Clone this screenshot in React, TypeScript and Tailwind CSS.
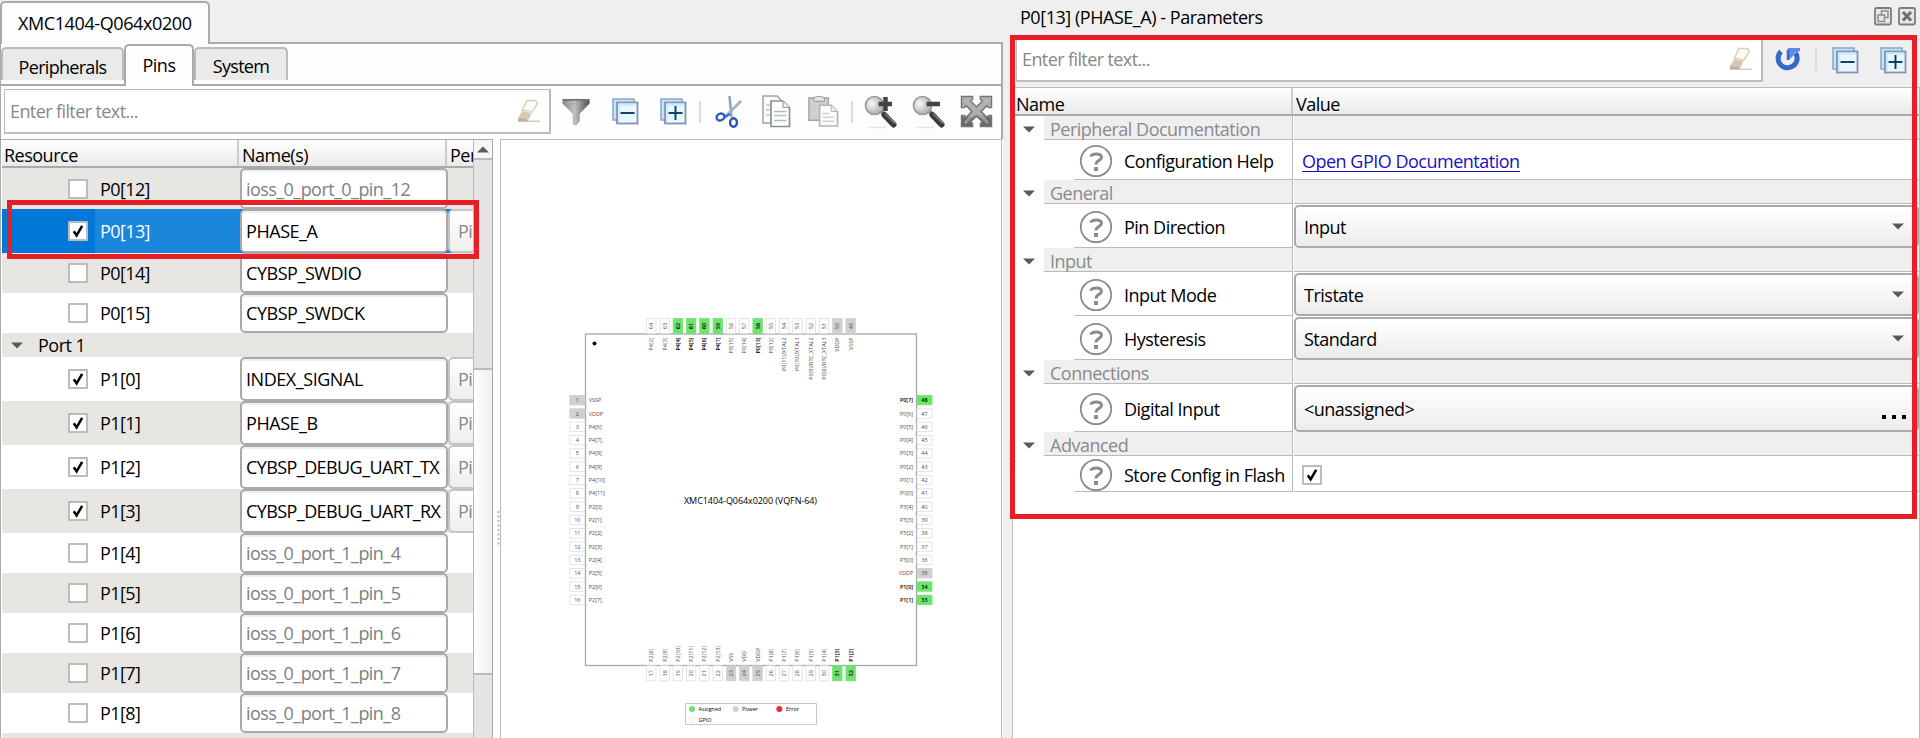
import React from "react";

const face = "font-['Open_Sans','Noto_Sans',sans-serif]";

function Check({ on }: { on?: boolean }) {
  return (
    <span className="flex h-5 w-5 shrink-0 items-center justify-center rounded-[1px] border-2 border-[#bcbcbc] bg-white">
      {on && (
        <svg width="12" height="14" viewBox="0 0 12 14">
          <path d="M1.8 7.2 L4.6 11.4 L10.2 1.8" fill="none" stroke="#000" strokeWidth="2.5" />
        </svg>
      )}
    </span>
  );
}

function Down() {
  return (
    <svg className="block shrink-0" width="12" height="7" viewBox="0 0 12 7">
      <path d="M0 0.5H12L6 6.5Z" fill="#5a5a5a" />
    </svg>
  );
}

function Eraser() {
  return (
    <svg width="24" height="24" viewBox="0 0 24 24">
      <path d="M10 1.500L18.500 1.500L20.500 4.500L15 13L5.500 11Z" fill="#fdfcf9" stroke="#d9cdbb" strokeWidth="1.400" />
      <path d="M5.500 11.500L15 13L10.500 22.500H1L1 19Z" fill="#d6c8b4" />
      <path d="M1.500 19.500L9 20L11 22.500H1Z" fill="#bfae98" />
      <path d="M6 12L14 13.500" stroke="#f1ebe2" strokeWidth="1.200" />
      <path d="M10 22.300H23" stroke="#cfcabd" strokeWidth="1.500" />
    </svg>
  );
}

function BoxIcon({ plus }: { plus?: boolean }) {
  return (
    <svg width="27" height="27" viewBox="0 0 27 27">
      <rect x="1" y="1" width="21" height="21" fill="#c4e2fa" stroke="#8ba6c4" strokeWidth="1.500" />
      <rect x="5" y="4.500" width="20.500" height="21" fill="#e8f7ff" stroke="#8294ae" strokeWidth="1.800" />
      <path d="M7 24V6.500H24" fill="none" stroke="#cbe8fc" strokeWidth="2" />
      <path d="M8.500 15H22.500" stroke="#003a66" strokeWidth="1.900" />
      {plus && <path d="M15.500 8V22" stroke="#003a66" strokeWidth="1.900" />}
    </svg>
  );
}

function Funnel() {
  return (
    <svg width="28" height="28" viewBox="0 0 30 30">
      <defs>
        <linearGradient id="fn" x1="0" x2="1">
          <stop offset="0" stopColor="#858585" />
          <stop offset=".45" stopColor="#c0c0c0" />
          <stop offset="1" stopColor="#4c4c4c" />
        </linearGradient>
      </defs>
      <path d="M.5 1H29.500V6L19 17V25L15 29.500L11.500 28V17L.5 6Z" fill="url(#fn)" />
      <path d="M1 2H29" stroke="#777" strokeWidth="2" />
      <path d="M4 6H20" stroke="#aaa" strokeWidth="1.500" />
    </svg>
  );
}

function Cut() {
  return (
    <svg width="28" height="34" viewBox="0 0 28 34">
      <path d="M14.500 1 L16.500 22" stroke="#8aa4c0" strokeWidth="2.500" />
      <path d="M26 6 L10 22" stroke="#9ab4ce" strokeWidth="2.800" />
      <path d="M15 19 L10 22" stroke="#3f6fc0" strokeWidth="2.500" />
      <ellipse cx="5.500" cy="22" rx="4" ry="3.300" transform="rotate(-25 5.5 22)" fill="none" stroke="#2a5cc8" strokeWidth="2.400" />
      <ellipse cx="18.500" cy="27.500" rx="3.400" ry="4.200" fill="none" stroke="#2450b8" strokeWidth="2.400" />
    </svg>
  );
}

function Copy() {
  return (
    <svg width="29" height="33" viewBox="0 0 29 33">
      <path d="M1 1H15L19 5V28H1Z" fill="#fbfbfb" stroke="#a2a2a2" strokeWidth="1.500" />
      <path d="M4 10H8M4 15H8M4 20H8" stroke="#b6c6d6" strokeWidth="1.500" />
      <path d="M9 6H21L27.500 12.500V31.500H9Z" fill="#fff" stroke="#8e8e8e" strokeWidth="1.700" />
      <path d="M21 6V12.500H27.500" fill="#eee" stroke="#999" />
      <path d="M12 16.500H24.500M12 20.500H24.500M12 25.500H24.500" stroke="#a9bdd0" strokeWidth="1.500" />
    </svg>
  );
}

function Paste() {
  return (
    <svg width="31" height="33" viewBox="0 0 32 33">
      <rect x="1" y="2.500" width="20" height="23" fill="#cfcfcf" stroke="#a5a5a5" strokeWidth="1.600" />
      <path d="M6 2.500L9 1H14L17 2.500V6H6Z" fill="#e4e4e4" stroke="#999" />
      <path d="M12 10H24L30.500 16.500V31.500H12Z" fill="#fdfdfd" stroke="#b3b3b3" strokeWidth="1.700" />
      <path d="M24 10V16.500H30.500" fill="#eee" stroke="#b3b3b3" />
      <path d="M15 18.500H22M15 22.500H27M15 26.500H27" stroke="#d0d0d0" strokeWidth="1.500" />
    </svg>
  );
}

function Lens({ plus }: { plus?: boolean }) {
  return (
    <svg width="34" height="34" viewBox="0 0 34 34">
      <defs>
        <radialGradient id="ln" cx=".35" cy=".4">
          <stop offset="0" stopColor="#fafafa" />
          <stop offset="1" stopColor="#bcbcbc" />
        </radialGradient>
      </defs>
      <path d="M4 32.500H22" stroke="#e6e6e6" strokeWidth="1.500" />
      <path d="M17 16L21 20" stroke="#8a8a8a" strokeWidth="4" />
      <path d="M20.500 20L29.500 29.500" stroke="#3a3a3a" strokeWidth="6" strokeLinecap="round" />
      <path d="M21 18.500L31 28.500" stroke="#808080" strokeWidth="1.500" />
      <circle cx="10.500" cy="10.500" r="9" fill="url(#ln)" stroke="#9a9a9a" strokeWidth="1.600" />
      <path d="M14.500 9H28" stroke="#444" strokeWidth="4.500" />
      {plus && <path d="M21.500 2V16" stroke="#444" strokeWidth="4.500" />}
    </svg>
  );
}

function Fit() {
  return (
    <svg width="33" height="33" viewBox="0 0 34 34">
      <defs>
        <linearGradient id="ft" x2="0" y2="1">
          <stop offset="0" stopColor="#b4b4b4" />
          <stop offset=".6" stopColor="#a0a0a0" />
          <stop offset=".75" stopColor="#666" />
          <stop offset="1" stopColor="#6a6a6a" />
        </linearGradient>
      </defs>
      <path
        d="M1.500 1.500H13V4.500L11 6.500L17 12L23 6.500L21 4.500V1.500H32.500V13H29.500L27.500 11L22 17L27.500 23L29.500 21H32.500V32.500H21V29.500L23 27.500L17 22L11 27.500L13 29.500V32.500H1.500V21H4.500L6.500 23L12 17L6.500 11L4.500 13H1.500Z"
        fill="url(#ft)"
        stroke="#757575"
        strokeWidth="1.400"
      />
      <path d="M5 5L29 29M29 5L5 29" stroke="#bcbcbc" strokeOpacity=".55" strokeWidth="3" />
    </svg>
  );
}

function Reset() {
  return (
    <svg width="26" height="26" viewBox="0 0 26 26">
      <path d="M6 4.500A9.500 9.500 0 1 0 20.500 6" fill="none" stroke="#3568c8" strokeWidth="5" />
      <path d="M13 1H25V4L20 5.500L18 9L14 13Z" fill="#5d8be0" />
      <path d="M13 2.500V13" stroke="#3b6ccc" strokeWidth="2.500" />
    </svg>
  );
}

function Help() {
  return (
    <svg className="shrink-0" width="34" height="34" viewBox="0 0 34 34">
      <circle cx="17" cy="17" r="15.200" fill="#fff" stroke="#8c8c8c" strokeWidth="1.800" />
      <path d="M12 12.800C12 9 22.500 9 22.500 13.200C22.500 16.500 17 16 17 20.500" fill="none" stroke="#8c8c8c" strokeWidth="3" />
      <path d="M15 25H19" stroke="#8c8c8c" strokeWidth="4" />
    </svg>
  );
}

const rows: [string, string, boolean, string, boolean][] = [
  ["P0[12]", "ioss_0_port_0_pin_12", false, "h-[41px]", true],
  ["P0[13]", "PHASE_A", true, "h-11", true],
  ["P0[14]", "CYBSP_SWDIO", false, "h-10", true],
  ["P0[15]", "CYBSP_SWDCK", false, "h-10", false],
  ["Port 1", "", false, "h-6", true],
  ["P1[0]", "INDEX_SIGNAL", true, "h-11", false],
  ["P1[1]", "PHASE_B", true, "h-11", true],
  ["P1[2]", "CYBSP_DEBUG_UART_TX", true, "h-11", false],
  ["P1[3]", "CYBSP_DEBUG_UART_RX", true, "h-11", true],
  ["P1[4]", "ioss_0_port_1_pin_4", false, "h-10", false],
  ["P1[5]", "ioss_0_port_1_pin_5", false, "h-10", true],
  ["P1[6]", "ioss_0_port_1_pin_6", false, "h-10", false],
  ["P1[7]", "ioss_0_port_1_pin_7", false, "h-10", true],
  ["P1[8]", "ioss_0_port_1_pin_8", false, "h-10", false],
];

function Row({ r }: { r: (typeof rows)[number] }) {
  const [id, name, on, h, shade] = r;
  const bg = shade ? "bg-[#e8e6e2]" : "bg-white";
  if (!name)
    return (
      <div className={`flex shrink-0 items-center pl-[9px] ${h} ${bg}`}>
        <Down />
        <span className="pl-[15px]">{id}</span>
      </div>
    );
  const sel = id === "P0[13]";
  return (
    <div className={`flex shrink-0 ${h} ${sel ? "bg-[#0878d8]" : bg}`}>
      <div className={`flex w-[238px] shrink-0 items-center pl-[66px] ${sel ? "bg-linear-to-r from-[#0078d7] from-39% to-[#1a86dc] to-39%" : ""}`}>
        <Check on={on} />
        <span className={`pl-3 tracking-[-0.6px] ${sel ? "text-white" : ""}`}>{id}</span>
      </div>
      <div className={`flex w-52 shrink-0 items-center rounded-[5px] border-2 border-[#aaa] bg-white pl-1 shadow-[inset_0_2px_0_#eee] ${name.startsWith("ioss") ? "tracking-[-0.56px] text-[#808080]" : name.startsWith("CYBSP_D") ? "tracking-[-0.58px]" : "tracking-[-0.45px]"}`}>
        {name}
      </div>
      {on && (
        <div className="flex w-14 shrink-0 items-center rounded-[5px] border-2 border-[#c4c4c4] bg-linear-to-b from-white to-[#eee] pl-2 text-[#888]">Pi</div>
      )}
    </div>
  );
}

const top = ["P4[2]", "P4[3]", "P4[4]", "P4[5]", "P4[6]", "P4[7]", "P0[15]", "P0[14]", "P0[13]", "P0[12]", "P0[11]/XTAL2", "P0[10]/XTAL1", "P0[9]/RTC_XTAL2", "P0[8]/RTC_XTAL1", "VDDP", "VSSP"];
const left = ["VSSP", "VDDP", "P4[6]", "P4[7]", "P4[8]", "P4[9]", "P4[10]", "P4[11]", "P2[0]", "P2[1]", "P2[2]", "P2[3]", "P2[4]", "P2[5]", "P2[6]", "P2[7]"];
const right = ["P0[7]", "P0[6]", "P0[5]", "P0[4]", "P0[3]", "P0[2]", "P0[1]", "P0[0]", "P3[4]", "P3[3]", "P3[2]", "P3[1]", "P3[0]", "VDDP", "P1[0]", "P1[1]"];
const bottom = ["P2[8]", "P2[9]", "P2[10]", "P2[11]", "P2[12]", "P2[13]", "VSS", "VDD", "VDDP", "P1[8]", "P1[7]", "P1[6]", "P1[5]", "P1[4]", "P1[3]", "P1[2]"];
const assigned = [62, 61, 60, 59, 56, 48, 34, 33, 31, 32];

function Pin({ n, label, x, y, turn, end }: { n: number; label: string; x: number; y: number; turn?: boolean; end?: boolean }) {
  const a = assigned.includes(n);
  const p = label.startsWith("V");
  const fill = a ? "#6ee46e" : p ? "#d0d0d0" : "#fff";
  const ink = a ? "#000" : "#4c4c4c";
  return (
    <g transform={`translate(${x} ${y})${turn ? " rotate(-90)" : ""}`}>
      <rect x="-7.500" y="-4.700" width="15" height="9.400" fill={fill} stroke={a || p ? fill : "#dedede"} strokeWidth=".8" />
      <text x="0" y="2" fontSize="5.500" textAnchor="middle" fill={ink} fontWeight={a ? 600 : 400}>{n}</text>
      <text x={end ? -11.5 : 11.5} y="2" fontSize="5.400" textAnchor={end ? "end" : "start"} fill={ink} fontWeight={a ? 600 : 400}>{label}</text>
    </g>
  );
}

function Chip() {
  return (
    <svg className="block tracking-normal" width="500" height="598" viewBox="501 140 500 598">
      <rect x="585.500" y="334" width="331" height="331.500" fill="#fff" stroke="#a8a8a8" strokeWidth="1.300" />
      <circle cx="594.500" cy="343.500" r="2" fill="#000" />
      {top.map((l, i) => <Pin key={i} n={64 - i} label={l} x={651.3 + i * 13.29} y={326} turn end />)}
      {left.map((l, i) => <Pin key={i} n={i + 1} label={l} x={577.3} y={400.2 + i * 13.31} />)}
      {right.map((l, i) => <Pin key={i} n={48 - i} label={l} x={924.5} y={400.2 + i * 13.31} end />)}
      {bottom.map((l, i) => <Pin key={i} n={17 + i} label={l} x={651.3 + i * 13.29} y={673.3} turn />)}
      <text x="750.500" y="504" fontSize="9" textAnchor="middle" textLength="133" fill="#000">XMC1404-Q064x0200 (VQFN-64)</text>
      <rect x="685.500" y="703.500" width="131" height="21" fill="#fff" stroke="#c8c8c8" />
      <circle cx="692" cy="709" r="3" fill="#6ee46e" />
      <circle cx="735.700" cy="709" r="3" fill="#cfcfcf" />
      <circle cx="779.300" cy="709" r="3" fill="#ee3030" />
      <circle cx="692" cy="719.500" r="2.700" fill="#fff" stroke="#ddd" strokeWidth=".7" />
      <g fontSize="5.400" fill="#000">
        <text x="698.500" y="711">Assigned</text>
        <text x="742" y="711">Power</text>
        <text x="786" y="711">Error</text>
        <text x="698.500" y="721.600">GPIO</text>
      </g>
    </svg>
  );
}

function Group({ name }: { name: string }) {
  return (
    <div className="flex h-6 shrink-0">
      <div className="flex w-[31px] shrink-0 items-center pt-0.5 pl-[10px]"><Down /></div>
      <div className="flex w-[249px] shrink-0 items-center border-r border-b border-[#bababa] bg-[#efefef] pt-[3px] pl-1.5 text-[#8a8a8a]">{name}</div>
      <div className="ml-px grow border-b border-[#bababa] bg-[#efefef]" />
    </div>
  );
}

function Param({ name, h, children }: { name: string; h: string; children: React.ReactNode }) {
  return (
    <div className={`flex shrink-0 ${h}`}>
      <div className="ml-[61px] flex w-[219px] shrink-0 items-center border-r border-b border-[#bababa] pl-[5px]">
        <span className="relative top-[1.5px] flex items-center">
          <Help />
          <span className="pl-[11px]">{name}</span>
        </span>
      </div>
      <div className="ml-px flex grow items-center">{children}</div>
    </div>
  );
}

function Combo({ text, dots }: { text: string; dots?: boolean }) {
  return (
    <div className="flex h-full grow pt-px">
      <div className="flex grow items-center rounded-[5px] border-2 border-[#aaa] bg-linear-to-b from-white to-[#ececec] pr-[13px] pl-2">
        <span className="grow pt-px">{text}</span>
        {dots ? (
          <span className="-mr-0.5 mt-[17px] flex gap-1.5">
            <i className="h-1 w-1 bg-black" /><i className="h-1 w-1 bg-black" /><i className="h-1 w-1 bg-black" />
          </span>
        ) : <Down />}
      </div>
    </div>
  );
}

export default function App() {
  return (
    <div className={`relative flex h-[738px] w-[1920px] overflow-hidden bg-[#efefef] text-[18px] leading-none tracking-[-0.5px] whitespace-nowrap text-black ${face}`}>
      <div className="flex w-[1003px] shrink-0 flex-col">
        <div className="flex h-11 shrink-0">
          <div className="mt-px flex w-[210px] items-center rounded-t-[5px] border-2 border-b-0 border-[#aaa] bg-[#fdfdfd] pb-0.5 pl-4 tracking-[-0.4px]">XMC1404-Q064x0200</div>
          <div className="grow border-b-2 border-[#aaa]" />
        </div>
        <div className="flex grow flex-col border-l border-[#aaa] bg-[#fdfdfd]">
          <div className="flex h-[42px] shrink-0 border-r-2 border-b-2 border-[#aaa]">
            <div className="mt-[3px] flex h-[33px] w-[123px] items-center justify-center rounded-t-[5px] border-2 border-b-0 border-[#bbb] bg-[#eaeaea] pt-1 tracking-[-0.7px]">Peripherals</div>
            <div className="z-10 flex h-[42px] w-[70px] items-center justify-center rounded-t-[5px] border-2 border-b-0 border-[#aaa] bg-[#fdfdfd] pb-0.5">Pins</div>
            <div className="mt-[3px] flex h-[33px] w-[94px] items-center justify-center rounded-t-[5px] border-2 border-b-0 border-[#bbb] bg-[#eaeaea] pt-[3px] tracking-[-0.7px]">System</div>
          </div>
          <div className="flex h-[53px] shrink-0 items-center border-r-2 border-[#aaa] pl-[3px]">
            <div className="-mt-[2px] flex h-[45px] w-[547px] items-center border border-r-2 border-b-2 border-[#bbb] bg-white pr-2 pl-[5px] tracking-[-0.6px] text-[#888]">
              <span className="grow">Enter filter text...</span>
              <Eraser />
            </div>
            <div className="-mt-[2px] flex grow items-center">
              <span className="ml-[11px] w-[30px]"><Funnel /></span>
              <span className="ml-5 w-[27px]"><BoxIcon /></span>
              <span className="ml-[21px] w-[27px]"><BoxIcon plus /></span>
              <span className="ml-3 h-[22px] w-0.5 bg-[#ddd]" />
              <span className="ml-[14px] w-7"><Cut /></span>
              <span className="ml-[19px] w-[29px]"><Copy /></span>
              <span className="ml-[17px] w-[31px]"><Paste /></span>
              <span className="ml-3 h-[22px] w-0.5 bg-[#ddd]" />
              <span className="ml-[11px] w-[34px]"><Lens plus /></span>
              <span className="ml-[14px] w-[34px]"><Lens /></span>
              <span className="ml-[14px] w-[33px]"><Fit /></span>
            </div>
          </div>
          <div className="flex h-[599px] shrink-0">
            <div className="flex w-[492px] shrink-0 border-t border-r border-[#aaa] bg-white">
              <div className="flex w-[472px] shrink-0 flex-col overflow-hidden pl-px">
                <div className="flex h-7 shrink-0 border-b-2 border-[#aaa] bg-linear-to-b from-white to-[#eaeaea]">
                  <div className="flex w-[237px] shrink-0 items-center border-r-2 border-[#ccc] pt-1 pl-0.5">Resource</div>
                  <div className="flex w-52 shrink-0 items-center border-r-2 border-[#ccc] pt-1 pl-[3px]">Name(s)</div>
                  <div className="flex shrink-0 items-center pt-1 pl-[3px]">Peripheral</div>
                </div>
                {rows.map((r) => <Row key={r[0]} r={r} />)}
                <div className="grow bg-[#e8e6e2]" />
              </div>
              <div className="flex w-[19px] shrink-0 flex-col border-l border-[#bbb] bg-[#e4e4e4]">
                <div className="flex h-5 items-center justify-center border-b-2 border-[#bbb] bg-[#f6f6f6]">
                  <svg width="12" height="7" viewBox="0 0 12 7"><path d="M0 6.500H12L6 .5Z" fill="#5a5a5a" /></svg>
                </div>
                <div className="h-[208px]" />
                <div className="h-[307px] border-y-2 border-[#bbb] bg-linear-to-r from-white to-[#eee]" />
              </div>
            </div>
            <div className="flex w-[7px] shrink-0 items-center justify-end pt-[178px]">
              <svg width="3" height="34"><path d="M1.500 0V34" stroke="#bbb" strokeWidth="2" strokeDasharray="2 2.500" /></svg>
            </div>
            <div className="w-[502px] shrink-0 border border-b-0 border-[#bbb] bg-white"><Chip /></div>
          </div>
        </div>
      </div>
      <div className="flex w-[9px] shrink-0 items-center justify-end pt-[176px]">
        <svg width="3" height="34"><path d="M1.500 0V34" stroke="#bbb" strokeWidth="2" strokeDasharray="2 2.500" /></svg>
      </div>
      <div className="flex w-[908px] flex-col">
        <div className="flex h-[38px] shrink-0 items-center pr-1 pl-2">
          <span className="grow pb-1 tracking-[-0.46px]">P0[13] (PHASE_A) - Parameters</span>
          <svg className="-mt-1.5" width="42" height="19" viewBox="0 0 42 19">
            <rect x="1" y="1" width="16" height="16.500" rx="1.500" fill="#e6e6e6" stroke="#7d7d7d" strokeWidth="1.800" />
            <path d="M7.500 8V4H14V10.500H10.500M4 8H10.500V14.500H4Z" fill="none" stroke="#8c8c8c" strokeWidth="1.500" />
            <rect x="25" y="1" width="16" height="16.500" rx="1.500" fill="#e6e6e6" stroke="#7d7d7d" strokeWidth="1.800" />
            <path d="M29 5L37 13.500M37 5L29 13.500" stroke="#6c6c6c" strokeWidth="3" />
          </svg>
        </div>
        <div className="flex h-[49px] shrink-0 items-start pl-1">
          <div className="flex h-11 w-[747px] items-center border border-t-0 border-r-2 border-b-2 border-[#bbb] bg-white pr-2 pl-[5px] tracking-[-0.6px] text-[#888]">
            <span className="grow">Enter filter text...</span>
            <Eraser />
          </div>
          <span className="mt-[9px] ml-3 w-[26px]"><Reset /></span>
          <span className="mt-2.5 ml-[14px] h-[22px] w-0.5 bg-[#ddd]" />
          <span className="mt-[9px] ml-[15px] w-[27px]"><BoxIcon /></span>
          <span className="mt-[9px] ml-[21px] w-[27px]"><BoxIcon plus /></span>
        </div>
        <div className="flex grow flex-col border-t border-r border-l border-[#bbb] bg-white">
          <div className="flex h-7 shrink-0 border-b-2 border-[#aaa] bg-linear-to-b from-white to-[#eaeaea]">
            <div className="flex w-[280px] items-center border-r-2 border-[#ccc] pt-1.5 pl-[3px]">Name</div>
            <div className="flex items-center pt-1.5 pl-[3px]">Value</div>
          </div>
          <Group name="Peripheral Documentation" />
          <Param name="Configuration Help" h="h-10">
            <div className="flex h-full grow items-center border-b border-[#bababa] pt-[5px] pl-2">
              <span className="border-b border-[#1a10c0] pb-px text-[#1a10c0]">Open GPIO Documentation</span>
            </div>
          </Param>
          <Group name="General" />
          <Param name="Pin Direction" h="h-11"><Combo text="Input" /></Param>
          <Group name="Input" />
          <Param name="Input Mode" h="h-11"><Combo text="Tristate" /></Param>
          <Param name="Hysteresis" h="h-11"><Combo text="Standard" /></Param>
          <Group name="Connections" />
          <Param name="Digital Input" h="h-12"><Combo text="<unassigned>" dots /></Param>
          <Group name="Advanced" />
          <Param name="Store Config in Flash" h="h-9">
            <div className="flex h-full grow items-center border-b border-[#bababa] pt-0.5 pl-2"><Check on /></div>
          </Param>
        </div>
      </div>
      <div className="absolute top-[200px] left-[7px] h-[59px] w-[472px] border-5 border-[#e81e26]" />
      <div className="absolute top-[35px] left-[1010px] h-[484px] w-[907px] border-5 border-[#e81e26]" />
    </div>
  );
}
